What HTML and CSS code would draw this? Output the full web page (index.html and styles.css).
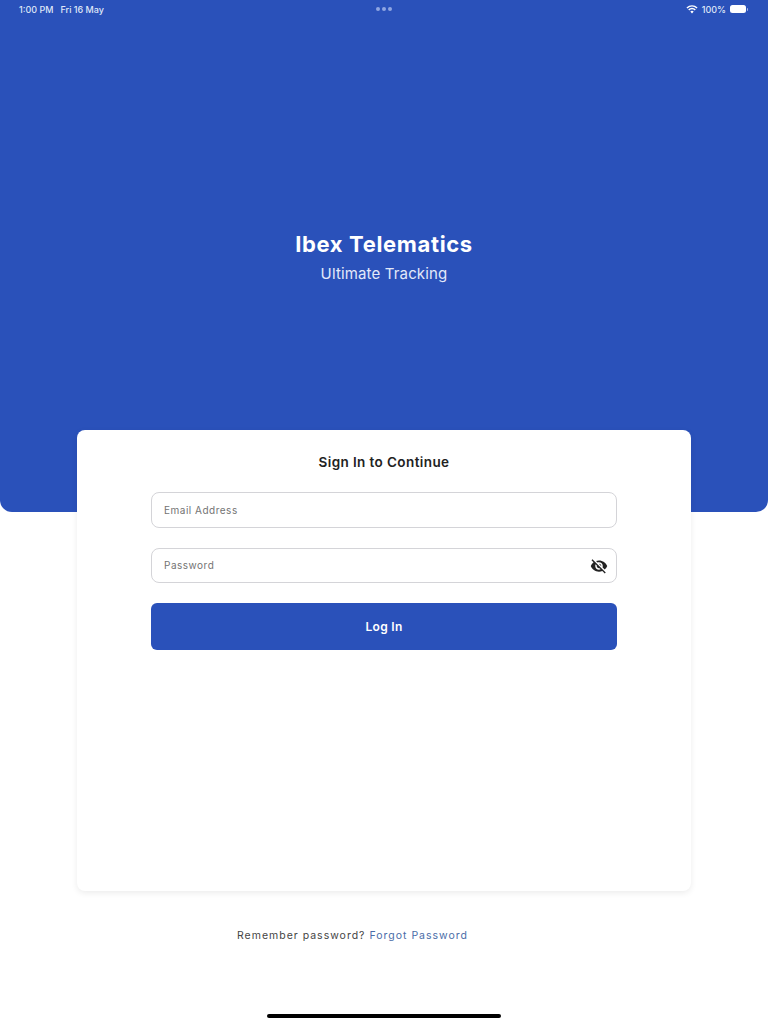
FILE: index.html
```html
<!DOCTYPE html>
<html lang="en-US">
  <head>
    <title>Ibex Telematics</title>
    <meta charset="utf-8" />
    <meta name="viewport" content="width=device-width, initial-scale=1.0" />
    <link rel="stylesheet" href="styles.css">
  </head>
  <body>
    <main id="page">
      <header id="hero">
        <div id="statusBar">
          <div class="statusLeft">
            <span>1:00 PM</span>
            <span>Fri 16 May</span>
          </div>
          <div class="statusDots"><i></i><i></i><i></i></div>
          <div class="statusRight">
            <svg width="12" height="9" viewBox="0 0 12 9" aria-hidden="true">
              <path class="wifiArc" d="M0.9 3.1C3.9 0.3 8.1 0.3 11.1 3.1" />
              <path class="wifiArc" d="M2.7 4.9C4.7 3.2 7.3 3.2 9.3 4.9" />
              <path class="wifiDot" d="M4.3 6.4C5.3 5.6 6.7 5.6 7.7 6.4L6 8.4Z" />
            </svg>
            <span>100%</span>
            <div class="battery"></div>
            <div class="batteryNub"></div>
          </div>
        </div>
        <div id="brand">
          <h1>Ibex Telematics</h1>
          <p>Ultimate Tracking</p>
        </div>
      </header>
      <section id="card">
        <h2>Sign In to Continue</h2>
        <form id="loginForm">
          <input class="field" type="text" placeholder="Email Address" />
          <div class="passwordField">
            <input class="field" type="password" placeholder="Password" />
            <svg class="eyeIcon" width="18" height="18" viewBox="0 0 24 24" aria-hidden="true">
              <path d="M12 7c2.76 0 5 2.24 5 5 0 .65-.13 1.26-.36 1.83l2.92 2.92c1.51-1.26 2.7-2.89 3.43-4.75-1.73-4.39-6-7.5-11-7.5-1.4 0-2.74.25-3.98.7l2.16 2.16C10.74 7.13 11.35 7 12 7zM2 4.27l2.28 2.28.46.46C3.08 8.3 1.78 10.02 1 12c1.73 4.39 6 7.5 11 7.5 1.55 0 3.03-.3 4.38-.84l.42.42L19.73 22 21 20.73 3.27 3 2 4.27zM7.53 9.8l1.55 1.55c-.05.21-.08.43-.08.65 0 1.66 1.34 3 3 3 .22 0 .44-.03.65-.08l1.55 1.55c-.67.33-1.41.53-2.2.53-2.76 0-5-2.24-5-5 0-.79.2-1.53.53-2.2zm4.31-.78l3.15 3.15.02-.16c0-1.66-1.34-3-3-3l-.17.01z" />
            </svg>
          </div>
          <button id="loginButton" type="button">Log In</button>
        </form>
      </section>
      <p id="forgotRow">Remember password? <a href="#">Forgot Password</a></p>
      <div id="homeIndicator"></div>
    </main>
  </body>
</html>
```

FILE: styles.css
```css
* {
  box-sizing: border-box;
  font-family: Inter, "Liberation Sans", sans-serif;
}
html {
  background-color: white;
}
body {
  margin: 0;
}
#page {
  display: flex;
  flex-flow: column nowrap;
  align-items: center;
  height: 1024px;
  overflow: hidden;
}
#hero {
  display: flex;
  flex-flow: column nowrap;
  width: 100%;
  height: 512px;
  flex-shrink: 0;
  border-radius: 0 0 12px 12px;
  background-color: #2a51ba;
  color: white;
}
#statusBar {
  display: grid;
  grid-template-columns: 1fr auto 1fr;
  align-items: center;
  height: 18px;
  padding: 0 20px 0 19px;
  color: #dfe6f7;
  font-size: 9px;
  font-weight: 500;
}
.statusLeft {
  display: flex;
  gap: 7px;
}
.statusDots {
  display: flex;
  gap: 2px;
}
.statusDots i {
  width: 4px;
  height: 4px;
  border-radius: 50%;
  background-color: #8fa6e2;
}
.statusRight {
  display: flex;
  align-items: center;
  justify-content: flex-end;
  gap: 4px;
}
.wifiArc {
  fill: none;
  stroke: white;
  stroke-width: 1.4;
}
.wifiDot {
  fill: white;
}
.battery {
  width: 16px;
  height: 8px;
  border-radius: 2.5px;
  background-color: white;
}
.batteryNub {
  width: 1px;
  height: 3px;
  margin-left: -3px;
  border-radius: 0 1px 1px 0;
  background-color: #a9b9e6;
}
#brand {
  display: flex;
  flex-flow: column nowrap;
  align-items: center;
  margin-top: 213px;
}
h1 {
  margin: 0;
  font-size: 22px;
  line-height: 27px;
  font-weight: 700;
  letter-spacing: 0.65px;
}
#brand p {
  margin: 5px 0 0;
  color: #e3e9f9;
  font-size: 15px;
  line-height: 22px;
  letter-spacing: 0.15px;
}
#card {
  display: flex;
  flex-flow: column nowrap;
  width: 614px;
  height: 461px;
  flex-shrink: 0;
  margin-top: -82px;
  padding: 22px 74px 0;
  border-radius: 8px;
  background-color: white;
  box-shadow: 0 2px 6px hsla(0, 0%, 0%, 0.08);
}
h2 {
  margin: 0 0 20px;
  color: #222;
  text-align: center;
  font-size: 13.5px;
  line-height: 20px;
  font-weight: 600;
  letter-spacing: 0.4px;
}
#loginForm {
  display: flex;
  flex-flow: column nowrap;
  gap: 20px;
}
.field {
  display: block;
  width: 100%;
  height: 35.5px;
  padding: 0 12px;
  border: 1px solid #d4d4d8;
  border-radius: 8px;
  background-color: white;
  font-size: 10px;
  letter-spacing: 0.5px;
}
.field::placeholder {
  color: #737373;
  opacity: 1;
}
.passwordField {
  position: relative;
}
.eyeIcon {
  position: absolute;
  top: 9px;
  right: 9px;
  fill: #222;
}
#loginButton {
  height: 47px;
  border: none;
  border-radius: 6px;
  background-color: #2a51ba;
  color: white;
  font-size: 12px;
  font-weight: 600;
  letter-spacing: 0.3px;
  cursor: pointer;
}
#forgotRow {
  margin: 37px 63px 0 0;
  color: #444;
  font-size: 10.5px;
  line-height: 16px;
  letter-spacing: 1px;
}
#forgotRow a {
  color: #4a6ca8;
  text-decoration: none;
}
#homeIndicator {
  width: 234px;
  height: 4px;
  margin-top: 70px;
  border-radius: 2px;
  background-color: black;
}
```
